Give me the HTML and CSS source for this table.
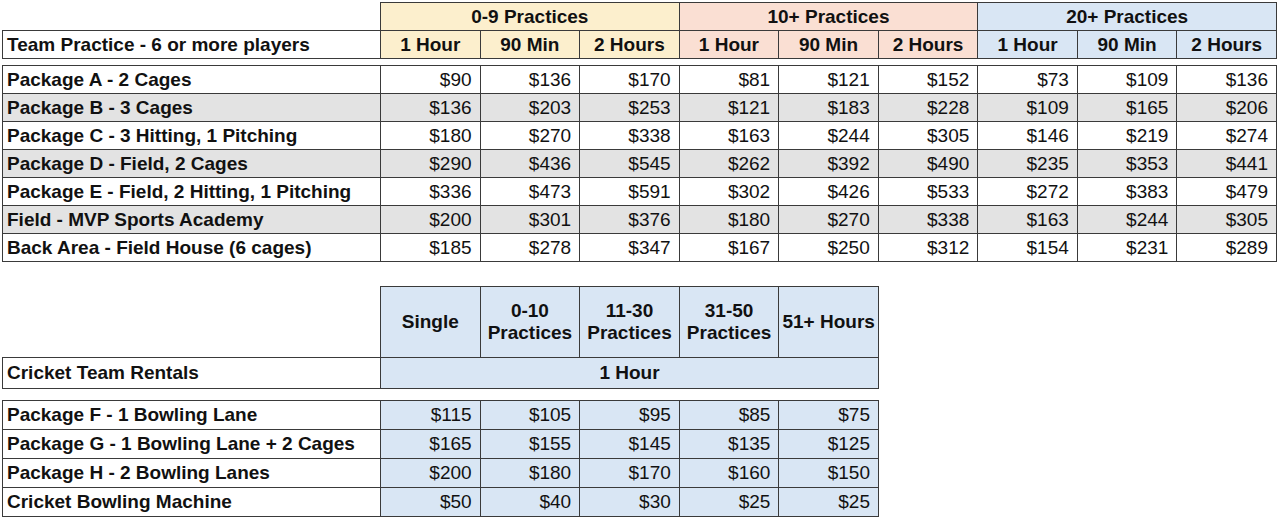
FILE: index.html
```html
<!DOCTYPE html>
<html>
<head>
<meta charset="utf-8">
<link rel="stylesheet" href="styles.css">
</head>
<body>
<div class="page">
  <table class="grid t1 head">
    <colgroup><col class="c-label"><col><col><col><col><col><col><col><col><col></colgroup>
    <tr class="h1">
      <th class="blank"></th>
      <th colspan="3" class="yel">0-9 Practices</th>
      <th colspan="3" class="pea">10+ Practices</th>
      <th colspan="3" class="blu">20+ Practices</th>
    </tr>
    <tr class="h2">
      <th class="label">Team Practice - 6 or more players</th>
      <th class="yel">1 Hour</th><th class="yel">90 Min</th><th class="yel">2 Hours</th>
      <th class="pea">1 Hour</th><th class="pea">90 Min</th><th class="pea">2 Hours</th>
      <th class="blu">1 Hour</th><th class="blu">90 Min</th><th class="blu">2 Hours</th>
    </tr>
  </table>
  <table class="grid t1 body1">
    <colgroup><col class="c-label"><col><col><col><col><col><col><col><col><col></colgroup>
    <tr><th class="label">Package A - 2 Cages</th><td>$90</td><td>$136</td><td>$170</td><td>$81</td><td>$121</td><td>$152</td><td>$73</td><td>$109</td><td>$136</td></tr>
    <tr class="alt"><th class="label">Package B - 3 Cages</th><td>$136</td><td>$203</td><td>$253</td><td>$121</td><td>$183</td><td>$228</td><td>$109</td><td>$165</td><td>$206</td></tr>
    <tr><th class="label">Package C - 3 Hitting, 1 Pitching</th><td>$180</td><td>$270</td><td>$338</td><td>$163</td><td>$244</td><td>$305</td><td>$146</td><td>$219</td><td>$274</td></tr>
    <tr class="alt"><th class="label">Package D - Field, 2 Cages</th><td>$290</td><td>$436</td><td>$545</td><td>$262</td><td>$392</td><td>$490</td><td>$235</td><td>$353</td><td>$441</td></tr>
    <tr><th class="label">Package E - Field, 2 Hitting, 1 Pitching</th><td>$336</td><td>$473</td><td>$591</td><td>$302</td><td>$426</td><td>$533</td><td>$272</td><td>$383</td><td>$479</td></tr>
    <tr class="alt"><th class="label">Field - MVP Sports Academy</th><td>$200</td><td>$301</td><td>$376</td><td>$180</td><td>$270</td><td>$338</td><td>$163</td><td>$244</td><td>$305</td></tr>
    <tr><th class="label">Back Area - Field House (6 cages)</th><td>$185</td><td>$278</td><td>$347</td><td>$167</td><td>$250</td><td>$312</td><td>$154</td><td>$231</td><td>$289</td></tr>
  </table>

  <table class="grid t2 head2">
    <colgroup><col class="c-label"><col><col><col><col><col></colgroup>
    <tr class="h3">
      <th class="blank"></th>
      <th class="blu">Single</th>
      <th class="blu">0-10<br>Practices</th>
      <th class="blu">11-30<br>Practices</th>
      <th class="blu">31-50<br>Practices</th>
      <th class="blu">51+ Hours</th>
    </tr>
    <tr class="h4">
      <th class="label">Cricket Team Rentals</th>
      <th colspan="5" class="blu">1 Hour</th>
    </tr>
  </table>
  <table class="grid t2 body2">
    <colgroup><col class="c-label"><col><col><col><col><col></colgroup>
    <tr><th class="label">Package F - 1 Bowling Lane</th><td>$115</td><td>$105</td><td>$95</td><td>$85</td><td>$75</td></tr>
    <tr><th class="label">Package G - 1 Bowling Lane + 2 Cages</th><td>$165</td><td>$155</td><td>$145</td><td>$135</td><td>$125</td></tr>
    <tr><th class="label">Package H - 2 Bowling Lanes</th><td>$200</td><td>$180</td><td>$170</td><td>$160</td><td>$150</td></tr>
    <tr><th class="label">Cricket Bowling Machine</th><td>$50</td><td>$40</td><td>$30</td><td>$25</td><td>$25</td></tr>
  </table>
</div>
</body>
</html>
```

FILE: styles.css
```css
html, body {
  margin: 0;
  padding: 0;
  background: #ffffff;
}

.page {
  padding: 2px 0 0 2px;
  font-family: "Liberation Sans", Arial, Helvetica, sans-serif;
  font-size: 19px;
  color: #111;
}

.grid {
  border-collapse: collapse;
  table-layout: fixed;
}

.grid th,
.grid td {
  border: 1px solid #3a3a3a;
  padding: 0 8px 0 4px;
  white-space: nowrap;
  overflow: hidden;
  line-height: 22px;
}

.grid th {
  font-weight: bold;
  text-align: center;
  padding: 0 3px;
}

.grid th.label {
  text-align: left;
  padding-left: 4px;
}

.grid td {
  text-align: right;
  font-weight: normal;
}

.grid th.blank {
  border: none;
  background: transparent;
}

.c-label { width: 378px; }

.t1 { width: 1275px; }
.t2 { width: 877px; }

.yel { background: #fcefcd; }
.pea { background: #fadfd3; }
.blu { background: #d9e6f4; }

.head tr { height: 28px; }
.body1 { margin-top: 6px; }
.body1 tr { height: 28px; }
.body1 tr.alt { background: #e3e3e3; }

.head2 { margin-top: 24px; }
.h3 { height: 71px; }
.h4 { height: 31px; }

.body2 { margin-top: 11px; }
.body2 tr { height: 29px; }
.body2 td { background: #d9e6f4; }
```
